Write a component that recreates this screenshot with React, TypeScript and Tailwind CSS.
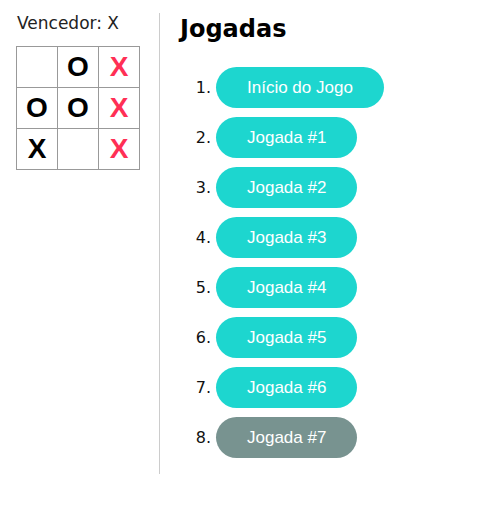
import React from 'react'

type Cell = { v: string; win?: boolean }

const BOARD: Cell[][] = [
  [{ v: '' }, { v: 'O' }, { v: 'X', win: true }],
  [{ v: 'O' }, { v: 'O' }, { v: 'X', win: true }],
  [{ v: 'X' }, { v: '' }, { v: 'X', win: true }],
]

const MOVES = [
  'Início do Jogo',
  'Jogada #1',
  'Jogada #2',
  'Jogada #3',
  'Jogada #4',
  'Jogada #5',
  'Jogada #6',
  'Jogada #7',
]

const cellBase =
  "w-[42px] h-[42px] -mr-px -mt-px border border-[#999999] flex items-center justify-center font-['Liberation_Sans',Arial,sans-serif] font-bold text-[28px] leading-none"

const btnBase =
  "ml-[5px] h-[41px] px-[31px] rounded-full text-white text-[17px] font-['Liberation_Sans',Arial,sans-serif]"

export default function App() {
  return (
    <div className="flex bg-white pl-4 pt-[13px] min-h-[512px]">
      {/* Game board */}
      <div className="w-[144px] h-[461px] border-r border-[#cccccc] font-['DejaVu_Sans',sans-serif]">
        <div className="text-[17px] leading-5 text-[#222] pl-px">Vencedor: X</div>
        <div className="mt-[14px]">
          {BOARD.map((row, r) => (
            <div key={r} className="flex">
              {row.map((c, i) => (
                <div key={i} className={`${cellBase} ${c.win ? 'text-[#ff2f55]' : 'text-black'}`}>
                  {c.v}
                </div>
              ))}
            </div>
          ))}
        </div>
      </div>

      {/* Move history */}
      <div className="pl-5">
        <h2 className="font-['DejaVu_Sans',sans-serif] font-bold text-2xl leading-8 text-black">Jogadas</h2>
        <ol className="mt-[22px] flex flex-col gap-[9px]">
          {MOVES.map((m, i) => (
            <li key={m} className="flex items-center">
              <span className="w-[31px] text-right font-['DejaVu_Sans',sans-serif] text-base text-[#111]">
                {i + 1}.
              </span>
              <button className={`${btnBase} ${i === MOVES.length - 1 ? 'bg-[#789390]' : 'bg-[#1dd6cf]'}`}>
                {m}
              </button>
            </li>
          ))}
        </ol>
      </div>
    </div>
  )
}
